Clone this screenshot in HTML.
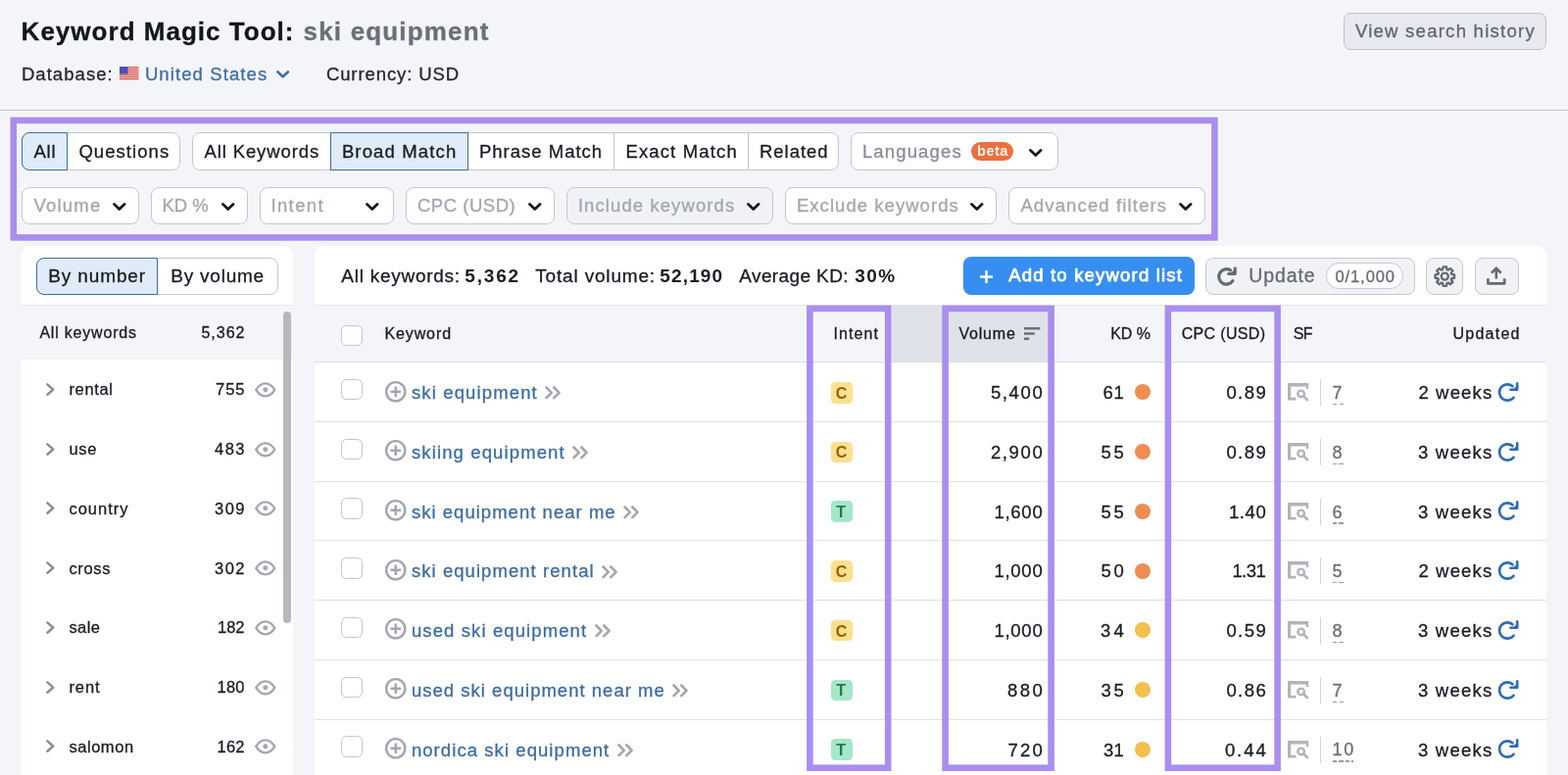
<!DOCTYPE html>
<html><head><meta charset="utf-8"><title>Keyword Magic Tool</title>
<style>
*{box-sizing:border-box;margin:0;padding:0}
html,body{width:1600px;height:791px;overflow:hidden;background:#f4f5f9;font-family:"Liberation Sans",sans-serif;color:#1b1d26}
.a{position:absolute}
.t{position:absolute;white-space:nowrap;-webkit-text-stroke:0.3px currentColor}
svg{position:absolute;overflow:visible}
</style></head><body>
<div id="app" style="position:absolute;left:0;top:0;width:1600px;height:791px;will-change:transform">
<svg style="left:121.6px;top:68px" width="19.5" height="14" viewBox="0 0 19.5 14"><rect width="19.5" height="14" fill="#f3f3f5"/><rect y="0" width="19.5" height="1.3" fill="#dc5850"/><rect y="2" width="19.5" height="1.3" fill="#dc5850"/><rect y="4" width="19.5" height="1.3" fill="#dc5850"/><rect y="6" width="19.5" height="1.3" fill="#dc5850"/><rect y="8" width="19.5" height="1.3" fill="#dc5850"/><rect y="10" width="19.5" height="1.3" fill="#dc5850"/><rect y="12" width="19.5" height="1.3" fill="#dc5850"/><rect width="8.6" height="7.6" fill="#4a52b5"/></svg>
<svg style="left:282.35px;top:72.19999999999999px" width="13.3" height="7.8" viewBox="0 0 13.3 7.8"><path d="M1.25 1.25 L6.65 6.2375 L12.05 1.25" fill="none" stroke="#3f6fa3" stroke-width="2.5" stroke-linecap="round" stroke-linejoin="round"/></svg>
<div class="a" style="left:0px;top:112px;width:1600px;height:1.3px;background:#c6c8ce"></div>
<div class="a" style="left:1371px;top:13px;width:206.5px;height:37.5px;background:#e8e9ef;border:1.3px solid #bfc1c9;border-radius:7px"></div>
<div class="a" style="left:22px;top:135px;width:162px;height:39px;background:#fff;border:1px solid #c4c7cf;border-radius:8px"></div>
<div class="a" style="left:22px;top:135px;width:47.3px;height:39px;background:#e0ebf9;border:1px solid #3f6fa3;border-radius:8px 0 0 8px;z-index:2"></div>
<div class="a" style="left:196px;top:135px;width:660px;height:39px;background:#fff;border:1px solid #c4c7cf;border-radius:8px"></div>
<div class="a" style="left:626px;top:135px;width:1px;height:39px;background:#c4c7cf"></div>
<div class="a" style="left:763px;top:135px;width:1px;height:39px;background:#c4c7cf"></div>
<div class="a" style="left:336.5px;top:135px;width:141.2px;height:39px;background:#e0ebf9;border:1px solid #3f6fa3;border-radius:0;z-index:2"></div>
<div class="a" style="left:868px;top:135px;width:211.70000000000005px;height:39px;background:#fff;border:1px solid #c4c7cf;border-radius:8px"></div>
<div class="a" style="left:991px;top:145px;width:43px;height:19px;background:#e9713f;border-radius:9.5px"></div>
<svg style="left:1049.65px;top:152.0px" width="13.5" height="8.2" viewBox="0 0 13.5 8.2"><path d="M1.35 1.35 L6.75 6.512499999999999 L12.15 1.35" fill="none" stroke="#15171d" stroke-width="2.7" stroke-linecap="round" stroke-linejoin="round"/></svg>
<div class="a" style="left:22px;top:191px;width:119.5px;height:37.5px;background:#fff;border:1px solid #c4c7cf;border-radius:8px"></div>
<svg style="left:114.95px;top:206.70000000000002px" width="13.5" height="8.2" viewBox="0 0 13.5 8.2"><path d="M1.35 1.35 L6.75 6.512499999999999 L12.15 1.35" fill="none" stroke="#15171d" stroke-width="2.7" stroke-linecap="round" stroke-linejoin="round"/></svg>
<div class="a" style="left:153.7px;top:191px;width:99.30000000000001px;height:37.5px;background:#fff;border:1px solid #c4c7cf;border-radius:8px"></div>
<svg style="left:225.95px;top:206.70000000000002px" width="13.5" height="8.2" viewBox="0 0 13.5 8.2"><path d="M1.35 1.35 L6.75 6.512499999999999 L12.15 1.35" fill="none" stroke="#15171d" stroke-width="2.7" stroke-linecap="round" stroke-linejoin="round"/></svg>
<div class="a" style="left:265px;top:191px;width:137px;height:37.5px;background:#fff;border:1px solid #c4c7cf;border-radius:8px"></div>
<svg style="left:372.75px;top:206.70000000000002px" width="13.5" height="8.2" viewBox="0 0 13.5 8.2"><path d="M1.35 1.35 L6.75 6.512499999999999 L12.15 1.35" fill="none" stroke="#15171d" stroke-width="2.7" stroke-linecap="round" stroke-linejoin="round"/></svg>
<div class="a" style="left:414px;top:191px;width:152px;height:37.5px;background:#fff;border:1px solid #c4c7cf;border-radius:8px"></div>
<svg style="left:538.75px;top:206.70000000000002px" width="13.5" height="8.2" viewBox="0 0 13.5 8.2"><path d="M1.35 1.35 L6.75 6.512499999999999 L12.15 1.35" fill="none" stroke="#15171d" stroke-width="2.7" stroke-linecap="round" stroke-linejoin="round"/></svg>
<div class="a" style="left:578px;top:191px;width:211px;height:37.5px;background:#f1f2f6;border:1px solid #c4c7cf;border-radius:8px"></div>
<svg style="left:761.95px;top:206.70000000000002px" width="13.5" height="8.2" viewBox="0 0 13.5 8.2"><path d="M1.35 1.35 L6.75 6.512499999999999 L12.15 1.35" fill="none" stroke="#15171d" stroke-width="2.7" stroke-linecap="round" stroke-linejoin="round"/></svg>
<div class="a" style="left:801px;top:191px;width:216px;height:37.5px;background:#fff;border:1px solid #c4c7cf;border-radius:8px"></div>
<svg style="left:989.95px;top:206.70000000000002px" width="13.5" height="8.2" viewBox="0 0 13.5 8.2"><path d="M1.35 1.35 L6.75 6.512499999999999 L12.15 1.35" fill="none" stroke="#15171d" stroke-width="2.7" stroke-linecap="round" stroke-linejoin="round"/></svg>
<div class="a" style="left:1029px;top:191px;width:200.5999999999999px;height:37.5px;background:#fff;border:1px solid #c4c7cf;border-radius:8px"></div>
<svg style="left:1202.95px;top:206.70000000000002px" width="13.5" height="8.2" viewBox="0 0 13.5 8.2"><path d="M1.35 1.35 L6.75 6.512499999999999 L12.15 1.35" fill="none" stroke="#15171d" stroke-width="2.7" stroke-linecap="round" stroke-linejoin="round"/></svg>
<div class="a" style="left:22px;top:251px;width:276.5px;height:545px;background:#fff;border-radius:9px 9px 0 0"></div>
<div class="a" style="left:37px;top:262.5px;width:246.5px;height:38.0px;background:#fff;border:1px solid #c4c7cf;border-radius:8px"></div>
<div class="a" style="left:37px;top:262.5px;width:123.69999999999999px;height:38.0px;background:#e0ebf9;border:1px solid #3f6fa3;border-radius:8px 0 0 8px;z-index:2"></div>
<div class="a" style="left:22px;top:311px;width:276.5px;height:56px;background:#f4f5f9;border-top:1px solid #e6e7ec"></div>
<div class="a" style="left:289.2px;top:317.5px;width:7.6px;height:318.5px;background:#b7b8bc;border-radius:3.8px"></div>
<svg style="left:46.5px;top:390.9px" width="8.8" height="13.2" viewBox="0 0 8.8 13.2"><path d="M1.4 1.4 L7.2 6.6 L1.4 11.8" fill="none" stroke="#8b8d95" stroke-width="2.5" stroke-linecap="round" stroke-linejoin="round"/></svg>
<svg style="left:260px;top:389.7px" width="21.6" height="15.6" viewBox="0 0 21.6 15.6"><path d="M1.3 7.8 C4.2 3 7.3 1.3 10.8 1.3 C14.3 1.3 17.4 3 20.3 7.8 C17.4 12.6 14.3 14.3 10.8 14.3 C7.3 14.3 4.2 12.6 1.3 7.8 Z" fill="none" stroke="#a3a6ad" stroke-width="2.3"/><circle cx="10.8" cy="7.8" r="2.5" fill="#a3a6ad"/></svg>
<svg style="left:46.5px;top:451.9px" width="8.8" height="13.2" viewBox="0 0 8.8 13.2"><path d="M1.4 1.4 L7.2 6.6 L1.4 11.8" fill="none" stroke="#8b8d95" stroke-width="2.5" stroke-linecap="round" stroke-linejoin="round"/></svg>
<svg style="left:260px;top:450.7px" width="21.6" height="15.6" viewBox="0 0 21.6 15.6"><path d="M1.3 7.8 C4.2 3 7.3 1.3 10.8 1.3 C14.3 1.3 17.4 3 20.3 7.8 C17.4 12.6 14.3 14.3 10.8 14.3 C7.3 14.3 4.2 12.6 1.3 7.8 Z" fill="none" stroke="#a3a6ad" stroke-width="2.3"/><circle cx="10.8" cy="7.8" r="2.5" fill="#a3a6ad"/></svg>
<svg style="left:46.5px;top:512.4px" width="8.8" height="13.2" viewBox="0 0 8.8 13.2"><path d="M1.4 1.4 L7.2 6.6 L1.4 11.8" fill="none" stroke="#8b8d95" stroke-width="2.5" stroke-linecap="round" stroke-linejoin="round"/></svg>
<svg style="left:260px;top:511.2px" width="21.6" height="15.6" viewBox="0 0 21.6 15.6"><path d="M1.3 7.8 C4.2 3 7.3 1.3 10.8 1.3 C14.3 1.3 17.4 3 20.3 7.8 C17.4 12.6 14.3 14.3 10.8 14.3 C7.3 14.3 4.2 12.6 1.3 7.8 Z" fill="none" stroke="#a3a6ad" stroke-width="2.3"/><circle cx="10.8" cy="7.8" r="2.5" fill="#a3a6ad"/></svg>
<svg style="left:46.5px;top:573.4px" width="8.8" height="13.2" viewBox="0 0 8.8 13.2"><path d="M1.4 1.4 L7.2 6.6 L1.4 11.8" fill="none" stroke="#8b8d95" stroke-width="2.5" stroke-linecap="round" stroke-linejoin="round"/></svg>
<svg style="left:260px;top:572.2px" width="21.6" height="15.6" viewBox="0 0 21.6 15.6"><path d="M1.3 7.8 C4.2 3 7.3 1.3 10.8 1.3 C14.3 1.3 17.4 3 20.3 7.8 C17.4 12.6 14.3 14.3 10.8 14.3 C7.3 14.3 4.2 12.6 1.3 7.8 Z" fill="none" stroke="#a3a6ad" stroke-width="2.3"/><circle cx="10.8" cy="7.8" r="2.5" fill="#a3a6ad"/></svg>
<svg style="left:46.5px;top:633.9px" width="8.8" height="13.2" viewBox="0 0 8.8 13.2"><path d="M1.4 1.4 L7.2 6.6 L1.4 11.8" fill="none" stroke="#8b8d95" stroke-width="2.5" stroke-linecap="round" stroke-linejoin="round"/></svg>
<svg style="left:260px;top:632.7px" width="21.6" height="15.6" viewBox="0 0 21.6 15.6"><path d="M1.3 7.8 C4.2 3 7.3 1.3 10.8 1.3 C14.3 1.3 17.4 3 20.3 7.8 C17.4 12.6 14.3 14.3 10.8 14.3 C7.3 14.3 4.2 12.6 1.3 7.8 Z" fill="none" stroke="#a3a6ad" stroke-width="2.3"/><circle cx="10.8" cy="7.8" r="2.5" fill="#a3a6ad"/></svg>
<svg style="left:46.5px;top:694.9px" width="8.8" height="13.2" viewBox="0 0 8.8 13.2"><path d="M1.4 1.4 L7.2 6.6 L1.4 11.8" fill="none" stroke="#8b8d95" stroke-width="2.5" stroke-linecap="round" stroke-linejoin="round"/></svg>
<svg style="left:260px;top:693.7px" width="21.6" height="15.6" viewBox="0 0 21.6 15.6"><path d="M1.3 7.8 C4.2 3 7.3 1.3 10.8 1.3 C14.3 1.3 17.4 3 20.3 7.8 C17.4 12.6 14.3 14.3 10.8 14.3 C7.3 14.3 4.2 12.6 1.3 7.8 Z" fill="none" stroke="#a3a6ad" stroke-width="2.3"/><circle cx="10.8" cy="7.8" r="2.5" fill="#a3a6ad"/></svg>
<svg style="left:46.5px;top:755.4px" width="8.8" height="13.2" viewBox="0 0 8.8 13.2"><path d="M1.4 1.4 L7.2 6.6 L1.4 11.8" fill="none" stroke="#8b8d95" stroke-width="2.5" stroke-linecap="round" stroke-linejoin="round"/></svg>
<svg style="left:260px;top:754.2px" width="21.6" height="15.6" viewBox="0 0 21.6 15.6"><path d="M1.3 7.8 C4.2 3 7.3 1.3 10.8 1.3 C14.3 1.3 17.4 3 20.3 7.8 C17.4 12.6 14.3 14.3 10.8 14.3 C7.3 14.3 4.2 12.6 1.3 7.8 Z" fill="none" stroke="#a3a6ad" stroke-width="2.3"/><circle cx="10.8" cy="7.8" r="2.5" fill="#a3a6ad"/></svg>
<div class="a" style="left:320.5px;top:251px;width:1257.5px;height:545px;background:#fff;border-radius:9px 9px 0 0"></div>
<div class="a" style="left:983px;top:262.3px;width:235.6px;height:38.3px;background:#368ff0;border-radius:8px"></div>
<svg style="left:1000px;top:275.6px" width="13" height="13" viewBox="0 0 13 13"><path d="M6.5 0V13M0 6.5H13" stroke="#fff" stroke-width="2.5" fill="none"/></svg>
<div class="a" style="left:1230px;top:262.5px;width:213.5px;height:38px;background:#f1f2f6;border:1.4px solid #c6c8cf;border-radius:8px"></div>
<svg style="left:1241.5px;top:271.5px" width="21" height="20" viewBox="0 0 21 20"><path d="M13.6 3.9 A7.7 7.7 0 1 0 15.9 14.6" fill="none" stroke="#676a74" stroke-width="3.2" stroke-linecap="round"/><path d="M11.6 7.4 H18.3 V1.7" fill="none" stroke="#676a74" stroke-width="3" stroke-linecap="round" stroke-linejoin="round"/><path d="M18.3 7.4H13.2L18.3 2.4Z" fill="#676a74"/></svg>
<div class="a" style="left:1353.4px;top:268.4px;width:78.8px;height:26.6px;background:#fff;border:1.4px solid #c8cad1;border-radius:13.3px"></div>
<div class="a" style="left:1455px;top:262.5px;width:38px;height:38px;background:#f1f2f6;border:1.4px solid #c6c8cf;border-radius:8px"></div>
<div class="a" style="left:1505px;top:262.5px;width:44.5px;height:38px;background:#f1f2f6;border:1.4px solid #c6c8cf;border-radius:8px"></div>
<svg style="left:1463px;top:270.7px" width="22.6" height="22.2" viewBox="0 0 22.6 22.2"><path d="M9.14 4.13 L9.63 1.34 L12.97 1.34 L13.46 4.13 L14.71 4.64 L17.02 3.02 L19.38 5.38 L17.76 7.69 L18.27 8.94 L21.06 9.43 L21.06 12.77 L18.27 13.26 L17.76 14.51 L19.38 16.82 L17.02 19.18 L14.71 17.56 L13.46 18.07 L12.97 20.86 L9.63 20.86 L9.14 18.07 L7.89 17.56 L5.58 19.18 L3.22 16.82 L4.84 14.51 L4.33 13.26 L1.54 12.77 L1.54 9.43 L4.33 8.94 L4.84 7.69 L3.22 5.38 L5.58 3.02 L7.89 4.64Z" fill="none" stroke="#676a74" stroke-width="2.4" stroke-linejoin="round"/><circle cx="11.3" cy="11.1" r="3.5" fill="none" stroke="#676a74" stroke-width="2.4"/></svg>
<svg style="left:1517.3px;top:272.3px" width="19.6" height="18.8" viewBox="0 0 19.6 18.8"><path d="M9.8 12.6V2.4M4.9 6.6L9.8 1.8L14.7 6.6M1.4 12.2V17.4H18.2V12.2" fill="none" stroke="#676a74" stroke-width="2.7" stroke-linejoin="round"/></svg>
<div class="a" style="left:320.5px;top:311px;width:1257.5px;height:1px;background:#e4e5ea"></div>
<div class="a" style="left:320.5px;top:312px;width:1257.5px;height:57.8px;background:#f4f5f9"></div>
<div class="a" style="left:909.5px;top:312px;width:160px;height:57.8px;background:#e0e2e9"></div>
<div class="a" style="left:320.5px;top:369.3px;width:1257.5px;height:1px;background:#dcdde3"></div>
<div class="a" style="left:348.4px;top:331.59999999999997px;width:21.4px;height:21.4px;background:#fff;border:1.5px solid #c3c5cc;border-radius:5.5px"></div>
<svg style="left:1044.7px;top:334.3px" width="16.3" height="13" viewBox="0 0 16.3 13"><path d="M0 1.2H16.3M0 6.5H10.7M0 11.8H5.2" stroke="#6c6e79" stroke-width="2.4" fill="none"/></svg>
<div class="a" style="left:348.4px;top:386.99999999999994px;width:21.4px;height:21.4px;background:#fff;border:1.5px solid #c3c5cc;border-radius:5.5px"></div>
<svg style="left:392.5px;top:388.59999999999997px" width="21.5" height="21.5" viewBox="0 0 21.5 21.5"><circle cx="10.75" cy="10.75" r="9.6" fill="none" stroke="#a3a6ad" stroke-width="2.4"/><path d="M10.75 5.4V16.1M5.4 10.75H16.1" stroke="#a3a6ad" stroke-width="2.4" fill="none"/></svg>
<svg style="left:556.3px;top:394.4px" width="16.4" height="13.6" viewBox="0 0 16.4 13.6"><path d="M1.5 1.5L6.8 6.8L1.5 12.1M9.3 1.5L14.6 6.8L9.3 12.1" fill="none" stroke="#a3a6ad" stroke-width="2.6" stroke-linecap="round" stroke-linejoin="round"/></svg>
<div class="a" style="left:848.3px;top:390.0px;width:21.6px;height:21.6px;background:#fbe08f;border-radius:4.5px"></div>
<div class="a" style="left:1158.2px;top:392.4px;width:16px;height:16px;background:#ee8d52;border-radius:50%"></div>
<svg style="left:1313.8px;top:391.3px" width="21.4" height="17.6" viewBox="0 0 21.4 17.6"><path d="M0 0H21.2V6H18.7V3.6H3.2V14.8H8.4V17.5H0Z" fill="#b1b4bb"/><circle cx="13.6" cy="10.9" r="3.3" fill="none" stroke="#b1b4bb" stroke-width="2.4"/><path d="M16.1 13.4L19.9 17" stroke="#b1b4bb" stroke-width="2.7" fill="none" stroke-linecap="round"/></svg>
<div class="a" style="left:1347px;top:387.2px;width:1.2px;height:27px;background:#d3d5db"></div>
<div class="a" style="left:1359.5px;top:412.0px;width:11.5px;height:1.3px;background:repeating-linear-gradient(90deg,#9a9ca5 0 4.3px,transparent 4.3px 6.5px)"></div>
<svg style="left:1529px;top:389.9px" width="21" height="21" viewBox="0 0 21 21"><path d="M14.47 4.22 A8.2 8.2 0 1 0 15.48 15.77" fill="none" stroke="#2f6db3" stroke-width="2.7" stroke-linecap="round"/><path d="M12.4 7.7 H19.2 V1.4" fill="none" stroke="#2f6db3" stroke-width="2.6" stroke-linecap="round" stroke-linejoin="round"/><path d="M19.2 7.7H14.8L19.2 3.3Z" fill="#2f6db3"/></svg>
<div class="a" style="left:320.5px;top:430.0px;width:1257.5px;height:1px;background:#e2e3e8"></div>
<div class="a" style="left:348.4px;top:447.7199999999999px;width:21.4px;height:21.4px;background:#fff;border:1.5px solid #c3c5cc;border-radius:5.5px"></div>
<svg style="left:392.5px;top:449.31999999999994px" width="21.5" height="21.5" viewBox="0 0 21.5 21.5"><circle cx="10.75" cy="10.75" r="9.6" fill="none" stroke="#a3a6ad" stroke-width="2.4"/><path d="M10.75 5.4V16.1M5.4 10.75H16.1" stroke="#a3a6ad" stroke-width="2.4" fill="none"/></svg>
<svg style="left:584.3px;top:455.11999999999995px" width="16.4" height="13.6" viewBox="0 0 16.4 13.6"><path d="M1.5 1.5L6.8 6.8L1.5 12.1M9.3 1.5L14.6 6.8L9.3 12.1" fill="none" stroke="#a3a6ad" stroke-width="2.6" stroke-linecap="round" stroke-linejoin="round"/></svg>
<div class="a" style="left:848.3px;top:450.71999999999997px;width:21.6px;height:21.6px;background:#fbe08f;border-radius:4.5px"></div>
<div class="a" style="left:1158.2px;top:453.11999999999995px;width:16px;height:16px;background:#ee8d52;border-radius:50%"></div>
<svg style="left:1313.8px;top:452.02px" width="21.4" height="17.6" viewBox="0 0 21.4 17.6"><path d="M0 0H21.2V6H18.7V3.6H3.2V14.8H8.4V17.5H0Z" fill="#b1b4bb"/><circle cx="13.6" cy="10.9" r="3.3" fill="none" stroke="#b1b4bb" stroke-width="2.4"/><path d="M16.1 13.4L19.9 17" stroke="#b1b4bb" stroke-width="2.7" fill="none" stroke-linecap="round"/></svg>
<div class="a" style="left:1347px;top:447.91999999999996px;width:1.2px;height:27px;background:#d3d5db"></div>
<div class="a" style="left:1359.5px;top:472.71999999999997px;width:12px;height:1.3px;background:repeating-linear-gradient(90deg,#9a9ca5 0 4.3px,transparent 4.3px 6.5px)"></div>
<svg style="left:1529px;top:450.61999999999995px" width="21" height="21" viewBox="0 0 21 21"><path d="M14.47 4.22 A8.2 8.2 0 1 0 15.48 15.77" fill="none" stroke="#2f6db3" stroke-width="2.7" stroke-linecap="round"/><path d="M12.4 7.7 H19.2 V1.4" fill="none" stroke="#2f6db3" stroke-width="2.6" stroke-linecap="round" stroke-linejoin="round"/><path d="M19.2 7.7H14.8L19.2 3.3Z" fill="#2f6db3"/></svg>
<div class="a" style="left:320.5px;top:490.70000000000005px;width:1257.5px;height:1px;background:#e2e3e8"></div>
<div class="a" style="left:348.4px;top:508.43999999999994px;width:21.4px;height:21.4px;background:#fff;border:1.5px solid #c3c5cc;border-radius:5.5px"></div>
<svg style="left:392.5px;top:510.03999999999996px" width="21.5" height="21.5" viewBox="0 0 21.5 21.5"><circle cx="10.75" cy="10.75" r="9.6" fill="none" stroke="#a3a6ad" stroke-width="2.4"/><path d="M10.75 5.4V16.1M5.4 10.75H16.1" stroke="#a3a6ad" stroke-width="2.4" fill="none"/></svg>
<svg style="left:636.3px;top:515.84px" width="16.4" height="13.6" viewBox="0 0 16.4 13.6"><path d="M1.5 1.5L6.8 6.8L1.5 12.1M9.3 1.5L14.6 6.8L9.3 12.1" fill="none" stroke="#a3a6ad" stroke-width="2.6" stroke-linecap="round" stroke-linejoin="round"/></svg>
<div class="a" style="left:848.3px;top:511.44px;width:21.6px;height:21.6px;background:#a5e7c7;border-radius:4.5px"></div>
<div class="a" style="left:1158.2px;top:513.84px;width:16px;height:16px;background:#ee8d52;border-radius:50%"></div>
<svg style="left:1313.8px;top:512.74px" width="21.4" height="17.6" viewBox="0 0 21.4 17.6"><path d="M0 0H21.2V6H18.7V3.6H3.2V14.8H8.4V17.5H0Z" fill="#b1b4bb"/><circle cx="13.6" cy="10.9" r="3.3" fill="none" stroke="#b1b4bb" stroke-width="2.4"/><path d="M16.1 13.4L19.9 17" stroke="#b1b4bb" stroke-width="2.7" fill="none" stroke-linecap="round"/></svg>
<div class="a" style="left:1347px;top:508.64px;width:1.2px;height:27px;background:#d3d5db"></div>
<div class="a" style="left:1359.5px;top:533.4399999999999px;width:12px;height:1.3px;background:repeating-linear-gradient(90deg,#9a9ca5 0 4.3px,transparent 4.3px 6.5px)"></div>
<svg style="left:1529px;top:511.34px" width="21" height="21" viewBox="0 0 21 21"><path d="M14.47 4.22 A8.2 8.2 0 1 0 15.48 15.77" fill="none" stroke="#2f6db3" stroke-width="2.7" stroke-linecap="round"/><path d="M12.4 7.7 H19.2 V1.4" fill="none" stroke="#2f6db3" stroke-width="2.6" stroke-linecap="round" stroke-linejoin="round"/><path d="M19.2 7.7H14.8L19.2 3.3Z" fill="#2f6db3"/></svg>
<div class="a" style="left:320.5px;top:551.4000000000001px;width:1257.5px;height:1px;background:#e2e3e8"></div>
<div class="a" style="left:348.4px;top:569.16px;width:21.4px;height:21.4px;background:#fff;border:1.5px solid #c3c5cc;border-radius:5.5px"></div>
<svg style="left:392.5px;top:570.76px" width="21.5" height="21.5" viewBox="0 0 21.5 21.5"><circle cx="10.75" cy="10.75" r="9.6" fill="none" stroke="#a3a6ad" stroke-width="2.4"/><path d="M10.75 5.4V16.1M5.4 10.75H16.1" stroke="#a3a6ad" stroke-width="2.4" fill="none"/></svg>
<svg style="left:614.3px;top:576.5600000000001px" width="16.4" height="13.6" viewBox="0 0 16.4 13.6"><path d="M1.5 1.5L6.8 6.8L1.5 12.1M9.3 1.5L14.6 6.8L9.3 12.1" fill="none" stroke="#a3a6ad" stroke-width="2.6" stroke-linecap="round" stroke-linejoin="round"/></svg>
<div class="a" style="left:848.3px;top:572.16px;width:21.6px;height:21.6px;background:#fbe08f;border-radius:4.5px"></div>
<div class="a" style="left:1158.2px;top:574.5600000000001px;width:16px;height:16px;background:#ee8d52;border-radius:50%"></div>
<svg style="left:1313.8px;top:573.46px" width="21.4" height="17.6" viewBox="0 0 21.4 17.6"><path d="M0 0H21.2V6H18.7V3.6H3.2V14.8H8.4V17.5H0Z" fill="#b1b4bb"/><circle cx="13.6" cy="10.9" r="3.3" fill="none" stroke="#b1b4bb" stroke-width="2.4"/><path d="M16.1 13.4L19.9 17" stroke="#b1b4bb" stroke-width="2.7" fill="none" stroke-linecap="round"/></svg>
<div class="a" style="left:1347px;top:569.36px;width:1.2px;height:27px;background:#d3d5db"></div>
<div class="a" style="left:1359.5px;top:594.16px;width:12px;height:1.3px;background:repeating-linear-gradient(90deg,#9a9ca5 0 4.3px,transparent 4.3px 6.5px)"></div>
<svg style="left:1529px;top:572.0600000000001px" width="21" height="21" viewBox="0 0 21 21"><path d="M14.47 4.22 A8.2 8.2 0 1 0 15.48 15.77" fill="none" stroke="#2f6db3" stroke-width="2.7" stroke-linecap="round"/><path d="M12.4 7.7 H19.2 V1.4" fill="none" stroke="#2f6db3" stroke-width="2.6" stroke-linecap="round" stroke-linejoin="round"/><path d="M19.2 7.7H14.8L19.2 3.3Z" fill="#2f6db3"/></svg>
<div class="a" style="left:320.5px;top:612.1px;width:1257.5px;height:1px;background:#e2e3e8"></div>
<div class="a" style="left:348.4px;top:629.8799999999999px;width:21.4px;height:21.4px;background:#fff;border:1.5px solid #c3c5cc;border-radius:5.5px"></div>
<svg style="left:392.5px;top:631.4799999999999px" width="21.5" height="21.5" viewBox="0 0 21.5 21.5"><circle cx="10.75" cy="10.75" r="9.6" fill="none" stroke="#a3a6ad" stroke-width="2.4"/><path d="M10.75 5.4V16.1M5.4 10.75H16.1" stroke="#a3a6ad" stroke-width="2.4" fill="none"/></svg>
<svg style="left:606.8px;top:637.28px" width="16.4" height="13.6" viewBox="0 0 16.4 13.6"><path d="M1.5 1.5L6.8 6.8L1.5 12.1M9.3 1.5L14.6 6.8L9.3 12.1" fill="none" stroke="#a3a6ad" stroke-width="2.6" stroke-linecap="round" stroke-linejoin="round"/></svg>
<div class="a" style="left:848.3px;top:632.8799999999999px;width:21.6px;height:21.6px;background:#fbe08f;border-radius:4.5px"></div>
<div class="a" style="left:1158.2px;top:635.28px;width:16px;height:16px;background:#f3bf4d;border-radius:50%"></div>
<svg style="left:1313.8px;top:634.18px" width="21.4" height="17.6" viewBox="0 0 21.4 17.6"><path d="M0 0H21.2V6H18.7V3.6H3.2V14.8H8.4V17.5H0Z" fill="#b1b4bb"/><circle cx="13.6" cy="10.9" r="3.3" fill="none" stroke="#b1b4bb" stroke-width="2.4"/><path d="M16.1 13.4L19.9 17" stroke="#b1b4bb" stroke-width="2.7" fill="none" stroke-linecap="round"/></svg>
<div class="a" style="left:1347px;top:630.0799999999999px;width:1.2px;height:27px;background:#d3d5db"></div>
<div class="a" style="left:1359.5px;top:654.8799999999999px;width:12px;height:1.3px;background:repeating-linear-gradient(90deg,#9a9ca5 0 4.3px,transparent 4.3px 6.5px)"></div>
<svg style="left:1529px;top:632.78px" width="21" height="21" viewBox="0 0 21 21"><path d="M14.47 4.22 A8.2 8.2 0 1 0 15.48 15.77" fill="none" stroke="#2f6db3" stroke-width="2.7" stroke-linecap="round"/><path d="M12.4 7.7 H19.2 V1.4" fill="none" stroke="#2f6db3" stroke-width="2.6" stroke-linecap="round" stroke-linejoin="round"/><path d="M19.2 7.7H14.8L19.2 3.3Z" fill="#2f6db3"/></svg>
<div class="a" style="left:320.5px;top:672.8px;width:1257.5px;height:1px;background:#e2e3e8"></div>
<div class="a" style="left:348.4px;top:690.5999999999999px;width:21.4px;height:21.4px;background:#fff;border:1.5px solid #c3c5cc;border-radius:5.5px"></div>
<svg style="left:392.5px;top:692.1999999999999px" width="21.5" height="21.5" viewBox="0 0 21.5 21.5"><circle cx="10.75" cy="10.75" r="9.6" fill="none" stroke="#a3a6ad" stroke-width="2.4"/><path d="M10.75 5.4V16.1M5.4 10.75H16.1" stroke="#a3a6ad" stroke-width="2.4" fill="none"/></svg>
<svg style="left:686.3px;top:698.0px" width="16.4" height="13.6" viewBox="0 0 16.4 13.6"><path d="M1.5 1.5L6.8 6.8L1.5 12.1M9.3 1.5L14.6 6.8L9.3 12.1" fill="none" stroke="#a3a6ad" stroke-width="2.6" stroke-linecap="round" stroke-linejoin="round"/></svg>
<div class="a" style="left:848.3px;top:693.5999999999999px;width:21.6px;height:21.6px;background:#a5e7c7;border-radius:4.5px"></div>
<div class="a" style="left:1158.2px;top:696.0px;width:16px;height:16px;background:#f3bf4d;border-radius:50%"></div>
<svg style="left:1313.8px;top:694.9px" width="21.4" height="17.6" viewBox="0 0 21.4 17.6"><path d="M0 0H21.2V6H18.7V3.6H3.2V14.8H8.4V17.5H0Z" fill="#b1b4bb"/><circle cx="13.6" cy="10.9" r="3.3" fill="none" stroke="#b1b4bb" stroke-width="2.4"/><path d="M16.1 13.4L19.9 17" stroke="#b1b4bb" stroke-width="2.7" fill="none" stroke-linecap="round"/></svg>
<div class="a" style="left:1347px;top:690.8px;width:1.2px;height:27px;background:#d3d5db"></div>
<div class="a" style="left:1359.5px;top:715.5999999999999px;width:11.5px;height:1.3px;background:repeating-linear-gradient(90deg,#9a9ca5 0 4.3px,transparent 4.3px 6.5px)"></div>
<svg style="left:1529px;top:693.5px" width="21" height="21" viewBox="0 0 21 21"><path d="M14.47 4.22 A8.2 8.2 0 1 0 15.48 15.77" fill="none" stroke="#2f6db3" stroke-width="2.7" stroke-linecap="round"/><path d="M12.4 7.7 H19.2 V1.4" fill="none" stroke="#2f6db3" stroke-width="2.6" stroke-linecap="round" stroke-linejoin="round"/><path d="M19.2 7.7H14.8L19.2 3.3Z" fill="#2f6db3"/></svg>
<div class="a" style="left:320.5px;top:733.5px;width:1257.5px;height:1px;background:#e2e3e8"></div>
<div class="a" style="left:348.4px;top:751.3199999999999px;width:21.4px;height:21.4px;background:#fff;border:1.5px solid #c3c5cc;border-radius:5.5px"></div>
<svg style="left:392.5px;top:752.92px" width="21.5" height="21.5" viewBox="0 0 21.5 21.5"><circle cx="10.75" cy="10.75" r="9.6" fill="none" stroke="#a3a6ad" stroke-width="2.4"/><path d="M10.75 5.4V16.1M5.4 10.75H16.1" stroke="#a3a6ad" stroke-width="2.4" fill="none"/></svg>
<svg style="left:629.8px;top:758.72px" width="16.4" height="13.6" viewBox="0 0 16.4 13.6"><path d="M1.5 1.5L6.8 6.8L1.5 12.1M9.3 1.5L14.6 6.8L9.3 12.1" fill="none" stroke="#a3a6ad" stroke-width="2.6" stroke-linecap="round" stroke-linejoin="round"/></svg>
<div class="a" style="left:848.3px;top:754.3199999999999px;width:21.6px;height:21.6px;background:#a5e7c7;border-radius:4.5px"></div>
<div class="a" style="left:1158.2px;top:756.72px;width:16px;height:16px;background:#f3bf4d;border-radius:50%"></div>
<svg style="left:1313.8px;top:755.62px" width="21.4" height="17.6" viewBox="0 0 21.4 17.6"><path d="M0 0H21.2V6H18.7V3.6H3.2V14.8H8.4V17.5H0Z" fill="#b1b4bb"/><circle cx="13.6" cy="10.9" r="3.3" fill="none" stroke="#b1b4bb" stroke-width="2.4"/><path d="M16.1 13.4L19.9 17" stroke="#b1b4bb" stroke-width="2.7" fill="none" stroke-linecap="round"/></svg>
<div class="a" style="left:1347px;top:751.52px;width:1.2px;height:27px;background:#d3d5db"></div>
<div class="a" style="left:1359.5px;top:776.3199999999999px;width:21.5px;height:1.3px;background:repeating-linear-gradient(90deg,#9a9ca5 0 4.3px,transparent 4.3px 6.5px)"></div>
<svg style="left:1529px;top:754.22px" width="21" height="21" viewBox="0 0 21 21"><path d="M14.47 4.22 A8.2 8.2 0 1 0 15.48 15.77" fill="none" stroke="#2f6db3" stroke-width="2.7" stroke-linecap="round"/><path d="M12.4 7.7 H19.2 V1.4" fill="none" stroke="#2f6db3" stroke-width="2.6" stroke-linecap="round" stroke-linejoin="round"/><path d="M19.2 7.7H14.8L19.2 3.3Z" fill="#2f6db3"/></svg>
<svg style="left:0;top:0;z-index:6" width="1600" height="791" viewBox="0 0 1600 791"><rect x="13.8" y="122.89999999999999" width="1225.6000000000001" height="119.5" fill="none" stroke="#a98ef0" stroke-width="6.6"/><rect x="826.4" y="314.90000000000003" width="79.79999999999998" height="468.79999999999995" fill="none" stroke="#a98ef0" stroke-width="6.6"/><rect x="964.5999999999999" y="314.90000000000003" width="108.00000000000014" height="468.79999999999995" fill="none" stroke="#a98ef0" stroke-width="6.6"/><rect x="1191.8999999999999" y="314.90000000000003" width="111.70000000000019" height="468.79999999999995" fill="none" stroke="#a98ef0" stroke-width="6.6"/></svg>
<div class="t" style="left:21.6px;top:17px;font-size:26px;height:30px;line-height:30px;color:#13151c;font-weight:700;letter-spacing:1.02px;">Keyword Magic Tool:</div>
<div class="t" style="left:309.6px;top:17px;font-size:26px;height:30px;line-height:30px;color:#6c6e79;font-weight:700;letter-spacing:1.17px;">ski equipment</div>
<div class="t" style="left:21.9px;top:64px;font-size:18.5px;height:23px;line-height:23px;color:#24262f;font-weight:400;letter-spacing:1.06px;">Database:</div>
<div class="t" style="left:147.9px;top:64px;font-size:18.5px;height:23px;line-height:23px;color:#3f6fa3;font-weight:400;letter-spacing:1.1px;">United States</div>
<div class="t" style="left:332.9px;top:64px;font-size:18.5px;height:23px;line-height:23px;color:#24262f;font-weight:400;letter-spacing:0.91px;">Currency: USD</div>
<div class="t" style="left:1382.9px;top:20px;font-size:18.5px;height:23px;line-height:23px;color:#62656f;font-weight:400;letter-spacing:1.26px;">View search history</div>
<div class="t" style="left:34.4px;top:143px;font-size:18.5px;height:23px;line-height:23px;color:#191b23;font-weight:400;letter-spacing:0.87px;z-index:3;">All</div>
<div class="t" style="left:80.4px;top:143px;font-size:18.5px;height:23px;line-height:23px;color:#191b23;font-weight:400;letter-spacing:1.06px;">Questions</div>
<div class="t" style="left:208.4px;top:143px;font-size:18.5px;height:23px;line-height:23px;color:#191b23;font-weight:400;letter-spacing:0.9px;">All Keywords</div>
<div class="t" style="left:348.9px;top:143px;font-size:18.5px;height:23px;line-height:23px;color:#191b23;font-weight:400;letter-spacing:1.14px;z-index:3;">Broad Match</div>
<div class="t" style="left:488.9px;top:143px;font-size:18.5px;height:23px;line-height:23px;color:#191b23;font-weight:400;letter-spacing:1.01px;">Phrase Match</div>
<div class="t" style="left:638.4px;top:143px;font-size:18.5px;height:23px;line-height:23px;color:#191b23;font-weight:400;letter-spacing:1.15px;">Exact Match</div>
<div class="t" style="left:774.9px;top:143px;font-size:18.5px;height:23px;line-height:23px;color:#191b23;font-weight:400;letter-spacing:1.0px;">Related</div>
<div class="t" style="left:879.9px;top:143px;font-size:18.5px;height:23px;line-height:23px;color:#898c95;font-weight:400;letter-spacing:1.15px;">Languages</div>
<div class="t" style="left:997.1px;top:145px;font-size:14.5px;height:19px;line-height:19px;color:#fff3ea;font-weight:700;letter-spacing:0.46px;-webkit-text-stroke:0;z-index:3;">beta</div>
<div class="t" style="left:34.4px;top:198px;font-size:18.5px;height:23px;line-height:23px;color:#a3a6af;font-weight:400;letter-spacing:1.22px;">Volume</div>
<div class="t" style="left:165.4px;top:198px;font-size:18.5px;height:23px;line-height:23px;color:#a3a6af;font-weight:400;letter-spacing:-0.0px;">KD %</div>
<div class="t" style="left:276.4px;top:198px;font-size:18.5px;height:23px;line-height:23px;color:#a3a6af;font-weight:400;letter-spacing:1.4px;">Intent</div>
<div class="t" style="left:425.9px;top:198px;font-size:18.5px;height:23px;line-height:23px;color:#a3a6af;font-weight:400;letter-spacing:0.53px;">CPC (USD)</div>
<div class="t" style="left:589.9px;top:198px;font-size:18.5px;height:23px;line-height:23px;color:#a3a6af;font-weight:400;letter-spacing:1.09px;">Include keywords</div>
<div class="t" style="left:812.9px;top:198px;font-size:18.5px;height:23px;line-height:23px;color:#a3a6af;font-weight:400;letter-spacing:1.05px;">Exclude keywords</div>
<div class="t" style="left:1041.4px;top:198px;font-size:18.5px;height:23px;line-height:23px;color:#a3a6af;font-weight:400;letter-spacing:1.14px;">Advanced filters</div>
<div class="t" style="left:49.3px;top:270px;font-size:19px;height:23px;line-height:23px;color:#191b23;font-weight:400;letter-spacing:0.87px;z-index:3;">By number</div>
<div class="t" style="left:174.3px;top:270px;font-size:19px;height:23px;line-height:23px;color:#191b23;font-weight:400;letter-spacing:0.77px;">By volume</div>
<div class="t" style="left:40.4px;top:330px;font-size:16px;height:20px;line-height:20px;color:#191b23;font-weight:400;letter-spacing:0.8px;">All keywords</div>
<div class="t" style="left:205.4px;top:330px;font-size:16px;height:20px;line-height:20px;color:#191b23;font-weight:400;letter-spacing:1.02px;">5,362</div>
<div class="t" style="left:70.4px;top:387px;font-size:16.5px;height:21px;line-height:21px;color:#191b23;font-weight:400;letter-spacing:0.67px;">rental</div>
<div class="t" style="left:219.9px;top:387px;font-size:16.5px;height:21px;line-height:21px;color:#191b23;font-weight:400;letter-spacing:1.06px;">755</div>
<div class="t" style="left:70.4px;top:448px;font-size:16.5px;height:21px;line-height:21px;color:#191b23;font-weight:400;letter-spacing:0.77px;">use</div>
<div class="t" style="left:218.9px;top:448px;font-size:16.5px;height:21px;line-height:21px;color:#191b23;font-weight:400;letter-spacing:1.56px;">483</div>
<div class="t" style="left:70.4px;top:509px;font-size:16.5px;height:21px;line-height:21px;color:#191b23;font-weight:400;letter-spacing:1.01px;">country</div>
<div class="t" style="left:218.9px;top:509px;font-size:16.5px;height:21px;line-height:21px;color:#191b23;font-weight:400;letter-spacing:1.56px;">309</div>
<div class="t" style="left:70.4px;top:570px;font-size:16.5px;height:21px;line-height:21px;color:#191b23;font-weight:400;letter-spacing:0.68px;">cross</div>
<div class="t" style="left:218.9px;top:570px;font-size:16.5px;height:21px;line-height:21px;color:#191b23;font-weight:400;letter-spacing:1.56px;">302</div>
<div class="t" style="left:70.4px;top:630px;font-size:16.5px;height:21px;line-height:21px;color:#191b23;font-weight:400;letter-spacing:0.46px;">sale</div>
<div class="t" style="left:221.9px;top:630px;font-size:16.5px;height:21px;line-height:21px;color:#191b23;font-weight:400;letter-spacing:0.06px;">182</div>
<div class="t" style="left:70.4px;top:691px;font-size:16.5px;height:21px;line-height:21px;color:#191b23;font-weight:400;letter-spacing:0.91px;">rent</div>
<div class="t" style="left:221.4px;top:691px;font-size:16.5px;height:21px;line-height:21px;color:#191b23;font-weight:400;letter-spacing:0.31px;">180</div>
<div class="t" style="left:70.4px;top:752px;font-size:16.5px;height:21px;line-height:21px;color:#191b23;font-weight:400;letter-spacing:0.55px;">salomon</div>
<div class="t" style="left:221.4px;top:752px;font-size:16.5px;height:21px;line-height:21px;color:#191b23;font-weight:400;letter-spacing:0.31px;">162</div>
<div class="t" style="left:348.3px;top:270px;font-size:19px;height:23px;line-height:23px;color:#191b23;font-weight:400;letter-spacing:0.74px;">All keywords:</div>
<div class="t" style="left:474.3px;top:270px;font-size:19px;height:23px;line-height:23px;color:#191b23;font-weight:700;letter-spacing:1.82px;-webkit-text-stroke:0;">5,362</div>
<div class="t" style="left:546.3px;top:270px;font-size:19px;height:23px;line-height:23px;color:#191b23;font-weight:400;letter-spacing:0.82px;">Total volume:</div>
<div class="t" style="left:673.3px;top:270px;font-size:19px;height:23px;line-height:23px;color:#191b23;font-weight:700;letter-spacing:1.14px;-webkit-text-stroke:0;">52,190</div>
<div class="t" style="left:754.3px;top:270px;font-size:19px;height:23px;line-height:23px;color:#191b23;font-weight:400;letter-spacing:0.39px;">Average KD:</div>
<div class="t" style="left:872.3px;top:270px;font-size:19px;height:23px;line-height:23px;color:#191b23;font-weight:700;letter-spacing:1.4px;-webkit-text-stroke:0;">30%</div>
<div class="t" style="left:1029.2px;top:269px;font-size:18.5px;height:23px;line-height:23px;color:#fff;font-weight:400;letter-spacing:1.19px;-webkit-text-stroke:0.75px #fff;">Add to keyword list</div>
<div class="t" style="left:1274.3px;top:269px;font-size:19.5px;height:24px;line-height:24px;color:#676a74;font-weight:400;letter-spacing:0.89px;">Update</div>
<div class="t" style="left:1362.4px;top:272px;font-size:16.5px;height:21px;line-height:21px;color:#676a74;font-weight:400;letter-spacing:0.93px;">0/1,000</div>
<div class="t" style="left:392.4px;top:331px;font-size:16px;height:20px;line-height:20px;color:#191b23;font-weight:400;letter-spacing:0.9px;">Keyword</div>
<div class="t" style="left:850.4px;top:331px;font-size:16px;height:20px;line-height:20px;color:#191b23;font-weight:400;letter-spacing:1.08px;">Intent</div>
<div class="t" style="left:978.4px;top:331px;font-size:16px;height:20px;line-height:20px;color:#191b23;font-weight:400;letter-spacing:0.81px;">Volume</div>
<div class="t" style="left:1133.2px;top:331px;font-size:16px;height:20px;line-height:20px;color:#191b23;font-weight:400;letter-spacing:-0.06px;">KD %</div>
<div class="t" style="left:1205.7px;top:331px;font-size:16px;height:20px;line-height:20px;color:#191b23;font-weight:400;letter-spacing:0.34px;">CPC (USD)</div>
<div class="t" style="left:1319.7px;top:331px;font-size:16px;height:20px;line-height:20px;color:#191b23;font-weight:400;letter-spacing:-0.63px;">SF</div>
<div class="t" style="left:1482.4px;top:331px;font-size:16px;height:20px;line-height:20px;color:#191b23;font-weight:400;letter-spacing:1.27px;">Updated</div>
<div class="t" style="left:419.9px;top:389px;font-size:18.5px;height:23px;line-height:23px;color:#3d6c9e;font-weight:400;letter-spacing:1.14px;">ski equipment</div>
<div class="t" style="left:852.8px;top:392px;font-size:16px;height:20px;line-height:20px;color:#9a5f0a;font-weight:700;letter-spacing:0.76px;-webkit-text-stroke:0;">C</div>
<div class="t" style="left:1010.9px;top:389px;font-size:18.5px;height:23px;line-height:23px;color:#191b23;font-weight:400;letter-spacing:1.62px;">5,400</div>
<div class="t" style="left:1125.4px;top:389px;font-size:18.5px;height:23px;line-height:23px;color:#191b23;font-weight:400;letter-spacing:0.72px;">61</div>
<div class="t" style="left:1251.4px;top:389px;font-size:18.5px;height:23px;line-height:23px;color:#191b23;font-weight:400;letter-spacing:1.43px;">0.89</div>
<div class="t" style="left:1359.4px;top:390px;font-size:18px;height:22px;line-height:22px;color:#6a6d78;font-weight:400;letter-spacing:1.74px;">7</div>
<div class="t" style="left:1447.4px;top:389px;font-size:18.5px;height:23px;line-height:23px;color:#191b23;font-weight:400;letter-spacing:1.15px;">2 weeks</div>
<div class="t" style="left:419.9px;top:450px;font-size:18.5px;height:23px;line-height:23px;color:#3d6c9e;font-weight:400;letter-spacing:1.13px;">skiing equipment</div>
<div class="t" style="left:852.8px;top:452px;font-size:16px;height:20px;line-height:20px;color:#9a5f0a;font-weight:700;letter-spacing:0.76px;-webkit-text-stroke:0;">C</div>
<div class="t" style="left:1010.9px;top:450px;font-size:18.5px;height:23px;line-height:23px;color:#191b23;font-weight:400;letter-spacing:1.62px;">2,900</div>
<div class="t" style="left:1123.4px;top:450px;font-size:18.5px;height:23px;line-height:23px;color:#191b23;font-weight:400;letter-spacing:2.72px;">55</div>
<div class="t" style="left:1251.4px;top:450px;font-size:18.5px;height:23px;line-height:23px;color:#191b23;font-weight:400;letter-spacing:1.43px;">0.89</div>
<div class="t" style="left:1359.4px;top:451px;font-size:18px;height:22px;line-height:22px;color:#6a6d78;font-weight:400;letter-spacing:2.24px;">8</div>
<div class="t" style="left:1446.9px;top:450px;font-size:18.5px;height:23px;line-height:23px;color:#191b23;font-weight:400;letter-spacing:1.24px;">3 weeks</div>
<div class="t" style="left:419.9px;top:511px;font-size:18.5px;height:23px;line-height:23px;color:#3d6c9e;font-weight:400;letter-spacing:1.03px;">ski equipment near me</div>
<div class="t" style="left:853.2px;top:513px;font-size:16px;height:20px;line-height:20px;color:#1f7a55;font-weight:700;letter-spacing:1.74px;-webkit-text-stroke:0;">T</div>
<div class="t" style="left:1014.4px;top:511px;font-size:18.5px;height:23px;line-height:23px;color:#191b23;font-weight:400;letter-spacing:0.75px;">1,600</div>
<div class="t" style="left:1123.4px;top:511px;font-size:18.5px;height:23px;line-height:23px;color:#191b23;font-weight:400;letter-spacing:2.72px;">55</div>
<div class="t" style="left:1253.9px;top:511px;font-size:18.5px;height:23px;line-height:23px;color:#191b23;font-weight:400;letter-spacing:0.59px;">1.40</div>
<div class="t" style="left:1359.4px;top:512px;font-size:18px;height:22px;line-height:22px;color:#6a6d78;font-weight:400;letter-spacing:2.24px;">6</div>
<div class="t" style="left:1446.9px;top:511px;font-size:18.5px;height:23px;line-height:23px;color:#191b23;font-weight:400;letter-spacing:1.24px;">3 weeks</div>
<div class="t" style="left:419.9px;top:571px;font-size:18.5px;height:23px;line-height:23px;color:#3d6c9e;font-weight:400;letter-spacing:1.06px;">ski equipment rental</div>
<div class="t" style="left:852.8px;top:574px;font-size:16px;height:20px;line-height:20px;color:#9a5f0a;font-weight:700;letter-spacing:0.76px;-webkit-text-stroke:0;">C</div>
<div class="t" style="left:1014.4px;top:571px;font-size:18.5px;height:23px;line-height:23px;color:#191b23;font-weight:400;letter-spacing:0.75px;">1,000</div>
<div class="t" style="left:1123.4px;top:571px;font-size:18.5px;height:23px;line-height:23px;color:#191b23;font-weight:400;letter-spacing:2.72px;">50</div>
<div class="t" style="left:1257.4px;top:571px;font-size:18.5px;height:23px;line-height:23px;color:#191b23;font-weight:400;letter-spacing:-0.57px;">1.31</div>
<div class="t" style="left:1359.4px;top:572px;font-size:18px;height:22px;line-height:22px;color:#6a6d78;font-weight:400;letter-spacing:2.24px;">5</div>
<div class="t" style="left:1447.4px;top:571px;font-size:18.5px;height:23px;line-height:23px;color:#191b23;font-weight:400;letter-spacing:1.15px;">2 weeks</div>
<div class="t" style="left:419.9px;top:632px;font-size:18.5px;height:23px;line-height:23px;color:#3d6c9e;font-weight:400;letter-spacing:1.11px;">used ski equipment</div>
<div class="t" style="left:852.8px;top:635px;font-size:16px;height:20px;line-height:20px;color:#9a5f0a;font-weight:700;letter-spacing:0.76px;-webkit-text-stroke:0;">C</div>
<div class="t" style="left:1014.4px;top:632px;font-size:18.5px;height:23px;line-height:23px;color:#191b23;font-weight:400;letter-spacing:0.75px;">1,000</div>
<div class="t" style="left:1122.9px;top:632px;font-size:18.5px;height:23px;line-height:23px;color:#191b23;font-weight:400;letter-spacing:3.22px;">34</div>
<div class="t" style="left:1251.4px;top:632px;font-size:18.5px;height:23px;line-height:23px;color:#191b23;font-weight:400;letter-spacing:1.43px;">0.59</div>
<div class="t" style="left:1359.4px;top:633px;font-size:18px;height:22px;line-height:22px;color:#6a6d78;font-weight:400;letter-spacing:2.24px;">8</div>
<div class="t" style="left:1446.9px;top:632px;font-size:18.5px;height:23px;line-height:23px;color:#191b23;font-weight:400;letter-spacing:1.24px;">3 weeks</div>
<div class="t" style="left:419.9px;top:693px;font-size:18.5px;height:23px;line-height:23px;color:#3d6c9e;font-weight:400;letter-spacing:1.02px;">used ski equipment near me</div>
<div class="t" style="left:853.2px;top:695px;font-size:16px;height:20px;line-height:20px;color:#1f7a55;font-weight:700;letter-spacing:1.74px;-webkit-text-stroke:0;">T</div>
<div class="t" style="left:1027.9px;top:693px;font-size:18.5px;height:23px;line-height:23px;color:#191b23;font-weight:400;letter-spacing:2.46px;">880</div>
<div class="t" style="left:1123.4px;top:693px;font-size:18.5px;height:23px;line-height:23px;color:#191b23;font-weight:400;letter-spacing:2.72px;">35</div>
<div class="t" style="left:1251.4px;top:693px;font-size:18.5px;height:23px;line-height:23px;color:#191b23;font-weight:400;letter-spacing:1.43px;">0.86</div>
<div class="t" style="left:1359.4px;top:694px;font-size:18px;height:22px;line-height:22px;color:#6a6d78;font-weight:400;letter-spacing:1.74px;">7</div>
<div class="t" style="left:1446.9px;top:693px;font-size:18.5px;height:23px;line-height:23px;color:#191b23;font-weight:400;letter-spacing:1.24px;">3 weeks</div>
<div class="t" style="left:419.9px;top:754px;font-size:18.5px;height:23px;line-height:23px;color:#3d6c9e;font-weight:400;letter-spacing:1.07px;">nordica ski equipment</div>
<div class="t" style="left:853.2px;top:756px;font-size:16px;height:20px;line-height:20px;color:#1f7a55;font-weight:700;letter-spacing:1.74px;-webkit-text-stroke:0;">T</div>
<div class="t" style="left:1028.4px;top:754px;font-size:18.5px;height:23px;line-height:23px;color:#191b23;font-weight:400;letter-spacing:2.21px;">720</div>
<div class="t" style="left:1125.9px;top:754px;font-size:18.5px;height:23px;line-height:23px;color:#191b23;font-weight:400;letter-spacing:0.22px;">31</div>
<div class="t" style="left:1249.9px;top:754px;font-size:18.5px;height:23px;line-height:23px;color:#191b23;font-weight:400;letter-spacing:1.93px;">0.44</div>
<div class="t" style="left:1359.4px;top:754px;font-size:18px;height:22px;line-height:22px;color:#6a6d78;font-weight:400;letter-spacing:1.73px;">10</div>
<div class="t" style="left:1446.9px;top:754px;font-size:18.5px;height:23px;line-height:23px;color:#191b23;font-weight:400;letter-spacing:1.24px;">3 weeks</div>

</div>
</body></html>
